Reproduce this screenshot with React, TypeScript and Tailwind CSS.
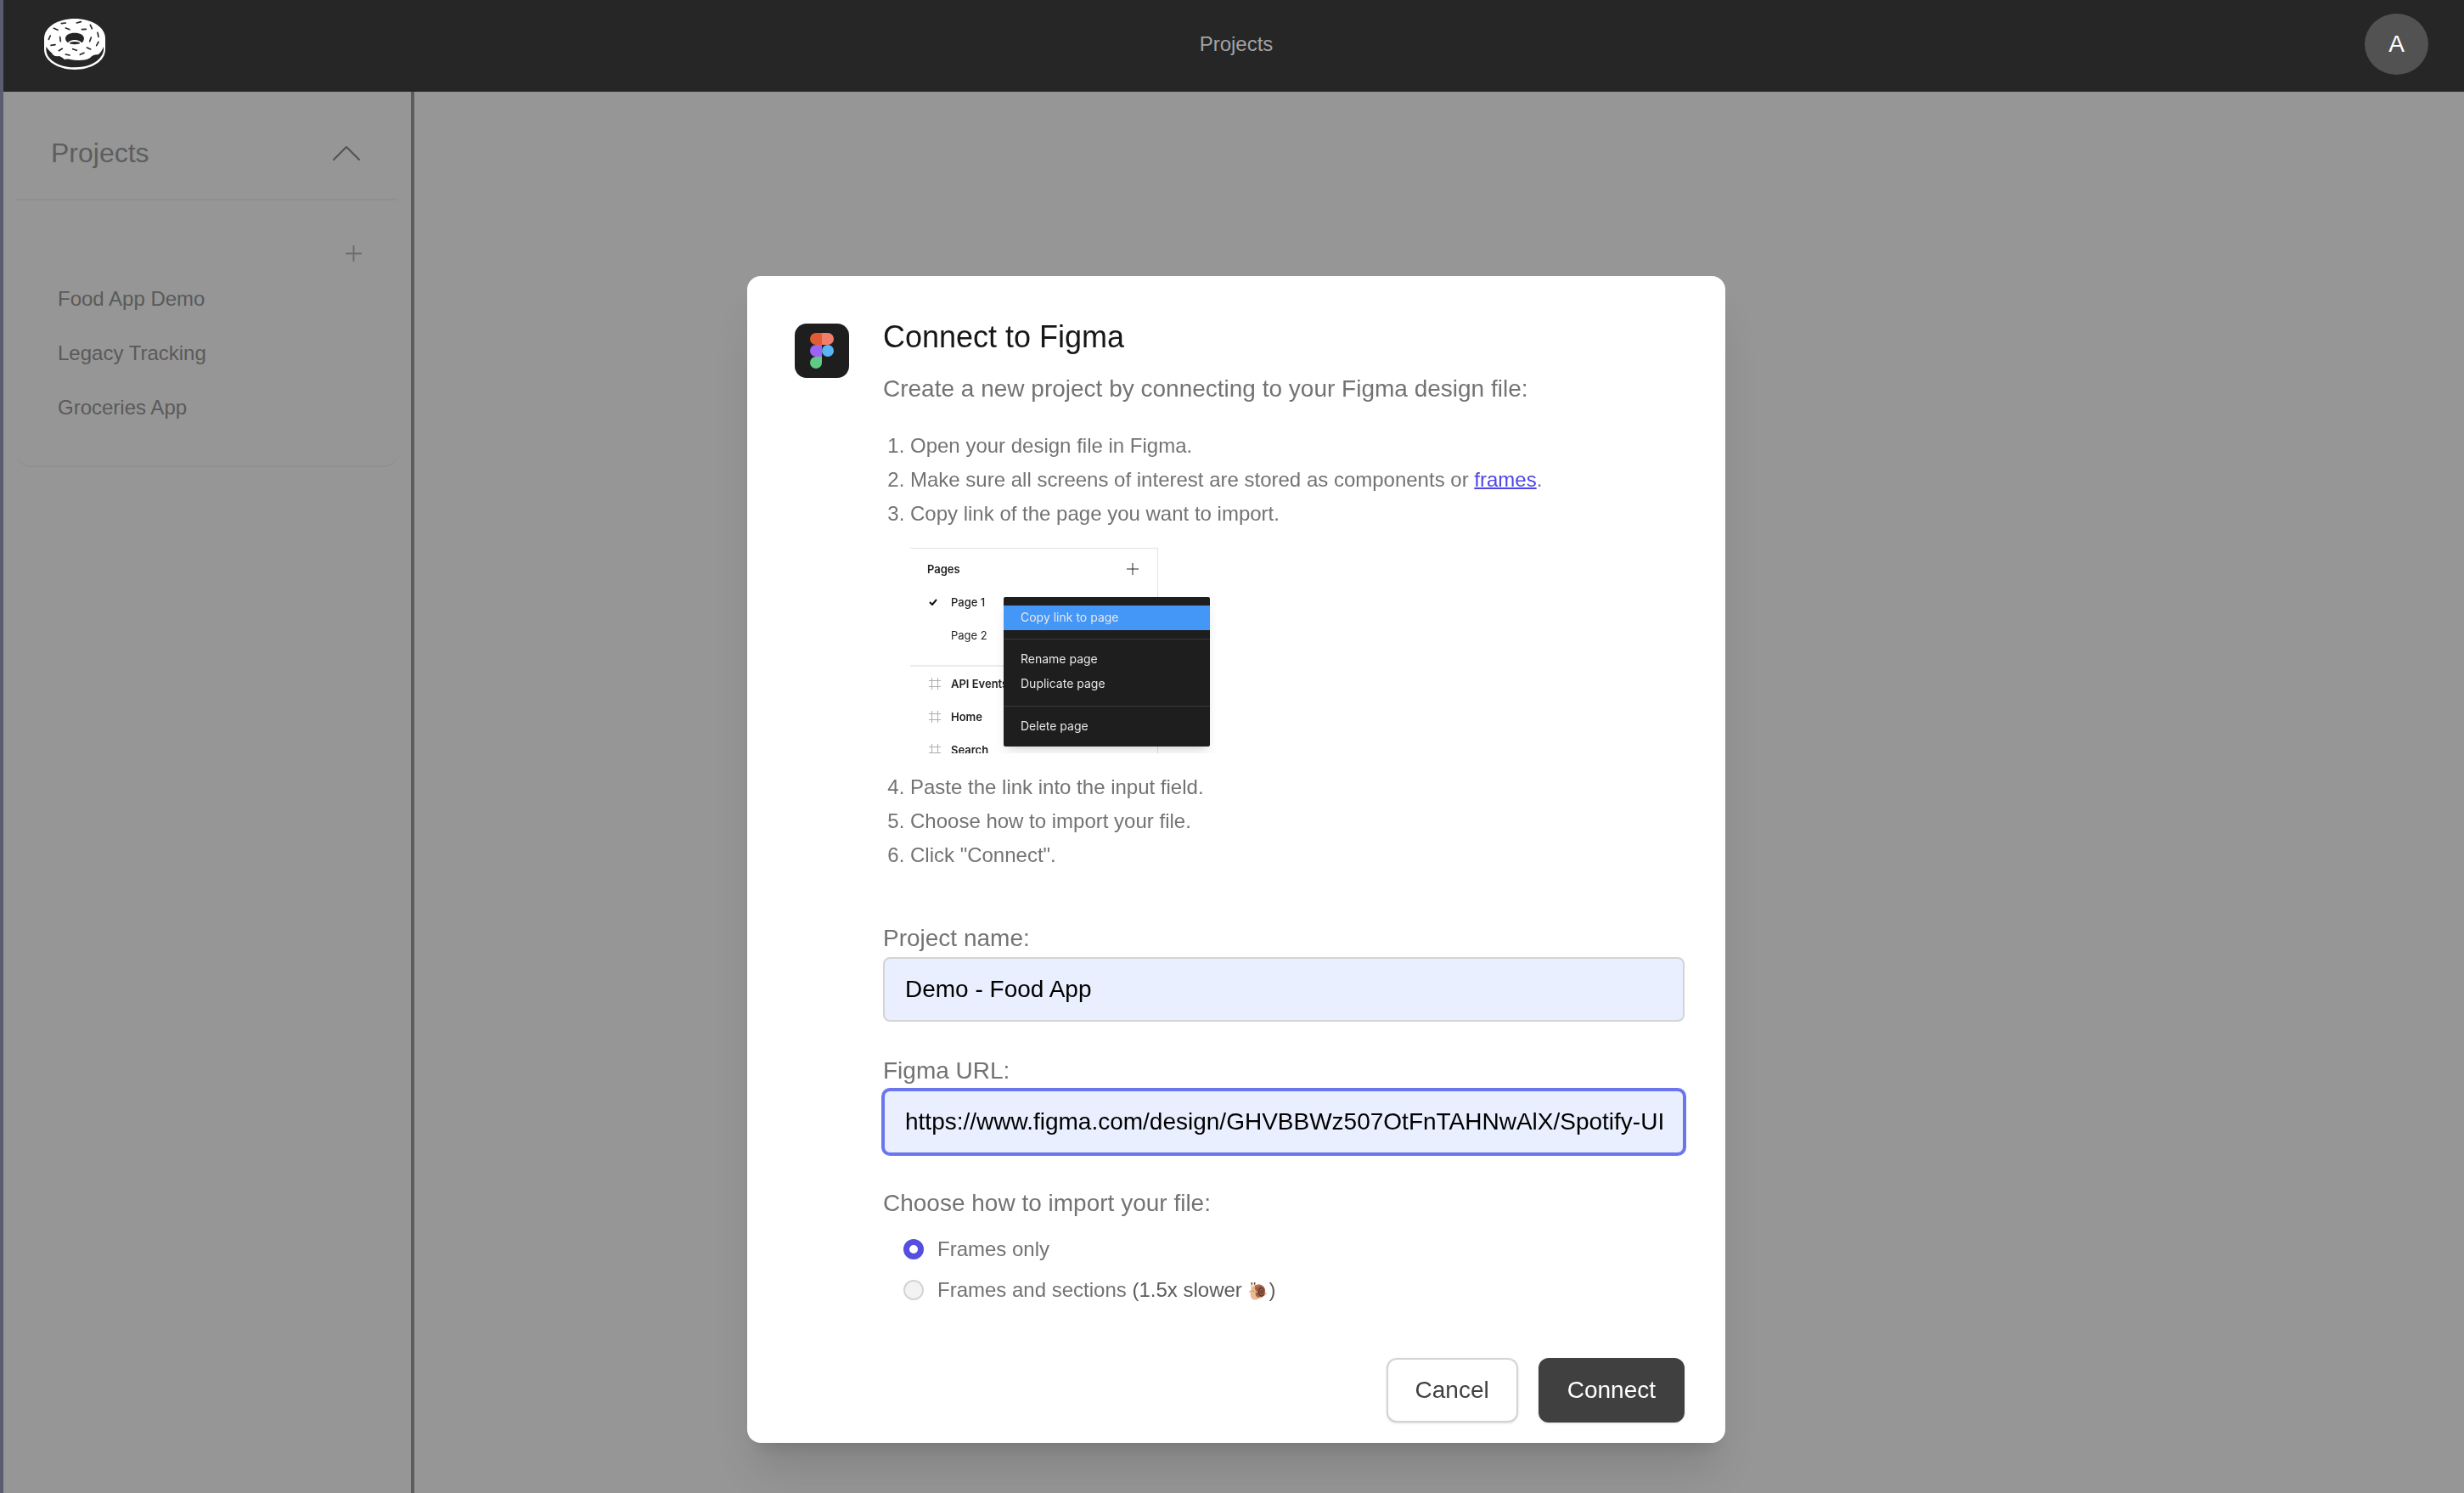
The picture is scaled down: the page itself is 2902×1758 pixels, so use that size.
import React, { useState } from "react";

const projects = ["Food App Demo", "Legacy Tracking", "Groceries App"];

const sprinkles = [
  [217, 83, 232, 81],
  [271, 81, 286, 77],
  [319, 88, 325, 101],
  [190, 100, 204, 106],
  [232, 99, 246, 104],
  [289, 104, 304, 103],
  [345, 115, 348, 130],
  [178, 126, 172, 139],
  [212, 131, 214, 146],
  [322, 132, 317, 146],
  [348, 148, 341, 161],
  [180, 160, 195, 158],
  [220, 172, 208, 179],
  [257, 173, 271, 178],
  [307, 168, 320, 174],
  [232, 192, 246, 195],
  [283, 193, 297, 187],
];

function DonutLogo() {
  return (
    <svg viewBox="156 66 216 180" className="h-[60px] w-[72px]" aria-hidden="true">
      <path
        fill="#fff"
        d="M156 136C156 95 205 66 264 66S372 95 372 136V175C372 215 325 246 264 246S156 215 156 175Z"
      />
      <path
        fill="#262626"
        d="M163 165C170 178 182 184 188 194Q196 200 210 198Q220 202 228 210Q240 207 252 211Q268 214 290 212Q306 213 318 205Q328 192 346 193Q358 186 366 165C368 178 364 190 358 198C342 224 305 238 264 238S186 224 169 197C164 188 162 176 163 165Z"
      />
      <path
        fill="#262626"
        d="M231 136C231 124 245 116 264 116S297 124 297 136C297 144 292 150 288 151C284 145 276 141 264 141S244 145 240 151C235 148 231 143 231 136Z"
      />
      <ellipse cx="264" cy="152" rx="18" ry="5" fill="#262626" />
      <g stroke="#262626" strokeWidth="5" strokeLinecap="round">
        {sprinkles.map(([x1, y1, x2, y2]) => (
          <line key={`${x1}-${y1}`} x1={x1} y1={y1} x2={x2} y2={y2} />
        ))}
      </g>
    </svg>
  );
}

function FigmaLogo() {
  return (
    <div className="flex h-16 w-16 shrink-0 items-center justify-center rounded-[14px] bg-[#1e1e1e]">
      <svg viewBox="0 0 28 42" className="h-[42px] w-7" aria-hidden="true">
        <path fill="#e25b32" d="M14 0H7a7 7 0 0 0 0 14h7z" />
        <path fill="#f07e6b" d="M14 0h7a7 7 0 0 1 0 14h-7z" />
        <path fill="#9b63f6" d="M14 14H7a7 7 0 0 0 0 14h7z" />
        <circle fill="#5ab5f8" cx="21" cy="21" r="7" />
        <path fill="#5ecb85" d="M14 28H7a7 7 0 1 0 7 7z" />
      </svg>
    </div>
  );
}

function FrameIcon() {
  return (
    <svg viewBox="0 0 14 14" className="h-3.5 w-3.5" fill="none" stroke="#adadad" aria-hidden="true">
      <path d="M3.500 0v14M10.500 0v14M0 3.500h14M0 10.500h14" />
    </svg>
  );
}

function PagesIllustration() {
  return (
    <div className="relative my-5 h-[242px] w-[360px] overflow-hidden font-[Inter,sans-serif] text-[13px] text-[#222]">
      <div className="h-full w-[292px] border-t border-r border-[#e2e2e2] pt-1">
        <div className="flex h-[39px] items-center justify-between pr-[22px] pl-5 font-semibold">
          Pages
          <svg viewBox="0 0 14 14" className="h-3.5 w-3.5" stroke="#222" aria-hidden="true">
            <path d="M7 0v14M0 7h14" />
          </svg>
        </div>
        <div className="flex h-[39px] items-center pl-[22px] font-medium">
          <svg viewBox="0 0 10 8" className="mr-4 h-2 w-2.5" fill="none" stroke="#111" strokeWidth="2" aria-hidden="true">
            <path d="M1 4l3 3 5-6" />
          </svg>
          Page 1
        </div>
        <div className="flex h-[39px] items-center pl-12">Page 2</div>
        <div className="mt-4 border-t-2 border-[#ebebeb] font-semibold">
          {["API Events", "Home", "Search"].map((name) => (
            <div key={name} className="flex h-[39px] items-center gap-3 pl-[22px]">
              <FrameIcon />
              {name}
            </div>
          ))}
        </div>
      </div>
      <div className="absolute top-[58px] left-[110px] w-[243px] rounded-xs bg-[#1e1e1e] text-sm text-[#e6e6e6] shadow-lg">
        <div className="mt-2.5 mb-2.5 bg-[#4597f7] px-5 pb-px leading-7">Copy link to page</div>
        <div className="border-y border-[#383838] px-5 pt-2 pb-3 leading-[29px]">
          <div>Rename page</div>
          <div>Duplicate page</div>
        </div>
        <div className="px-5 pt-2 pb-2.5 leading-[29px]">Delete page</div>
      </div>
    </div>
  );
}

const inputClass =
  "block h-[76px] w-full rounded-lg border-2 bg-[#e9effe] px-6 text-[28px] text-black outline-none";
const labelClass = "block text-[28px] leading-[44px]";
const radioClass =
  "h-6 w-6 appearance-none rounded-full border-2 border-[#d4d4d4] bg-[#f3f3f3] checked:border-[7px] checked:border-[#554fe0] checked:bg-white";

function ConnectDialog() {
  const [name, setName] = useState("Demo - Food App");
  const [url, setUrl] = useState("https://www.figma.com/design/GHVBBWz507OtFnTAHNwAlX/Spotify-UI");
  const [mode, setMode] = useState("frames");

  return (
    <div className="fixed inset-0 flex items-start justify-center pt-[325px] pl-2.5">
      <form
        role="dialog"
        aria-labelledby="dialog-title"
        onSubmit={(e) => e.preventDefault()}
        className="flex w-full max-w-[1152px] gap-10 rounded-2xl bg-white pt-12 pr-12 pb-6 pl-14 text-[#737373] shadow-[0_40px_50px_-10px_rgba(0,0,0,0.12),0_16px_20px_-12px_rgba(0,0,0,0.12)]"
      >
        <div className="pt-2">
          <FigmaLogo />
        </div>
        <div className="min-w-0 flex-1">
          <h2 id="dialog-title" className="text-[36px] leading-[48px] text-[#171717]">
            Connect to Figma
          </h2>
          <p className="mt-4 text-[28px] leading-[42px]">
            Create a new project by connecting to your Figma design file:
          </p>
          <ol className="mt-[26px] list-decimal pl-8 text-2xl leading-10">
            <li>Open your design file in Figma.</li>
            <li>
              Make sure all screens of interest are stored as components or{" "}
              <a href="#frames" className="text-[#4f46e5] underline decoration-2">
                frames
              </a>
              .
            </li>
            <li>
              Copy link of the page you want to import.
              <PagesIllustration />
            </li>
            <li>Paste the link into the input field.</li>
            <li>Choose how to import your file.</li>
            <li>Click "Connect".</li>
          </ol>

          <label htmlFor="project-name" className={`${labelClass} mt-14`}>
            Project name:
          </label>
          <input
            id="project-name"
            type="text"
            className={`${inputClass} border-[#d4d4d4]`}
            value={name}
            onChange={(e) => setName(e.target.value)}
          />

          <label htmlFor="figma-url" className={`${labelClass} mt-9`}>
            Figma URL:
          </label>
          <input
            id="figma-url"
            type="text"
            className={`${inputClass} border-[#6b76ee] ring-2 ring-[#6b76ee]`}
            value={url}
            onChange={(e) => setUrl(e.target.value)}
          />

          <fieldset className="mt-9">
            <legend className={labelClass}>Choose how to import your file:</legend>
            <div className="mt-2 pl-6 text-2xl leading-[48px]">
              <label className="flex items-center gap-4">
                <input
                  type="radio"
                  name="mode"
                  className={radioClass}
                  checked={mode === "frames"}
                  onChange={() => setMode("frames")}
                />
                Frames only
              </label>
              <label className="flex h-12 items-center gap-4">
                <input
                  type="radio"
                  name="mode"
                  className={radioClass}
                  checked={mode === "sections"}
                  onChange={() => setMode("sections")}
                />
                <span>
                  Frames and sections{" "}
                  <span className="text-[#5c5c5c]">
                    (1.5x slower <span className="text-xl">🐌</span>)
                  </span>
                </span>
              </label>
            </div>
          </fieldset>

          <div className="mt-14 flex justify-end gap-6 text-[28px]">
            <button
              type="button"
              className="h-[76px] rounded-xl border-2 border-[#d4d4d4] bg-white px-8 text-[#404040] shadow-sm"
            >
              Cancel
            </button>
            <button
              type="submit"
              className="h-[76px] rounded-xl border-2 border-[#404040] bg-[#404040] px-8 text-white shadow-sm"
            >
              Connect
            </button>
          </div>
        </div>
      </form>
    </div>
  );
}

export default function App() {
  return (
    <div className="flex min-h-screen flex-col border-l-4 border-[#5b5c6e] bg-[#969696] font-['Liberation_Sans',Arial,sans-serif]">
      <header className="grid h-[108px] grid-cols-3 items-center bg-[#262626] pr-[42px] pb-1 pl-12">
        <a href="#home" aria-label="Home" className="justify-self-start">
          <DonutLogo />
        </a>
        <a href="#projects" className="justify-self-center text-2xl text-[#a3a3a3]">
          Projects
        </a>
        <button
          type="button"
          className="h-[72px] w-[75px] justify-self-end rounded-[50%] bg-[#525252] text-[28px] text-white"
        >
          A
        </button>
      </header>

      <div className="flex flex-1">
        <aside className="w-[484px] border-r-4 border-[#5c5c5c] px-4">
          <button
            type="button"
            className="flex h-32 w-full items-center justify-between border-b-2 border-[#8f8f8f] pt-[18px] pr-11 pl-10 text-[32px] text-[#5c5e5e]"
          >
            Projects
            <svg viewBox="0 0 32 18" className="h-[18px] w-8" fill="none" stroke="#525252" strokeWidth="2" strokeLinecap="round" strokeLinejoin="round" aria-hidden="true">
              <path d="M1 17L16 2L31 17" />
            </svg>
          </button>
          <div className="rounded-b-2xl border-b-2 border-[#8f8f8f] pb-9 pl-12">
            <div className="flex h-[84px] items-end justify-end pr-[42px] pb-3">
              <button type="button" aria-label="Add project">
                <svg viewBox="0 0 19 19" className="h-[19px] w-[19px]" stroke="#6e6e6e" strokeWidth="2" aria-hidden="true">
                  <path d="M9.500 0v19M0 9.500h19" />
                </svg>
              </button>
            </div>
            <nav className="flex flex-col text-2xl leading-[64px] text-[#5a5a5a]">
              {projects.map((project) => (
                <a key={project} href="#project">
                  {project}
                </a>
              ))}
            </nav>
          </div>
        </aside>
        <main className="flex-1" />
      </div>

      <ConnectDialog />
    </div>
  );
}
